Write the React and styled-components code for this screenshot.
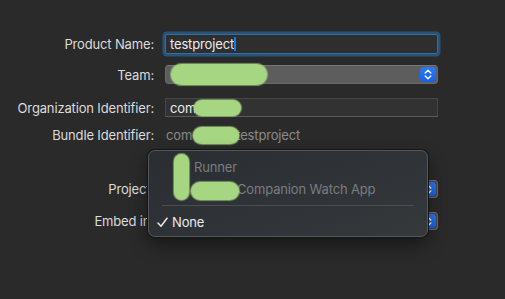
import styled, { createGlobalStyle } from "styled-components";

const GlobalStyle = createGlobalStyle`
  html, body {
    margin: 0;
    background: #2a2a2a;
  }
  body {
    font-family: Inter, "Noto Sans", sans-serif;
    letter-spacing: -0.15px;
    -webkit-font-smoothing: antialiased;
  }
`;

function Stepper() {
  return (
    <StepperBox>
      <svg width="8" height="11" viewBox="0 0 8 11" fill="none">
        <path d="M1.2 4 L4 1.3 L6.8 4" stroke="#fff" strokeWidth="1.4" strokeLinecap="round" strokeLinejoin="round" />
        <path d="M1.2 7 L4 9.7 L6.8 7" stroke="#fff" strokeWidth="1.4" strokeLinecap="round" strokeLinejoin="round" />
      </svg>
    </StepperBox>
  );
}

function Check() {
  return (
    <svg width="11" height="11" viewBox="0 0 11 11" fill="none">
      <path d="M1 6 L4 9.3 L10 1.2" stroke="#e6e6e6" strokeWidth="1.5" strokeLinecap="round" strokeLinejoin="round" />
    </svg>
  );
}

function App() {
  return (
    <>
      <GlobalStyle />
      <Page>
        <Form>
          <Row $top={34} $h={20}>
            <Label>Product Name:</Label>
            <TextField $focused>
              testproject
              <Caret />
            </TextField>
          </Row>
          <Row $top={11} $h={19}>
            <Label>Team:</Label>
            <Popup>
              <Blob style={{ left: 5, top: -2, width: 96, height: 21 }} />
              <Stepper />
            </Popup>
          </Row>
          <Row $top={14} $h={19}>
            <Label>Organization Identifier:</Label>
            <TextField>
              com
              <Blob style={{ left: 28, top: 1, width: 47, height: 16 }} />
            </TextField>
          </Row>
          <Row $top={10} $h={16}>
            <Label>Bundle Identifier:</Label>
            <Plain>
              com<Gap />testproject
              <Blob style={{ left: 28, top: 0, width: 46, height: 17 }} />
            </Plain>
          </Row>
          <Row $top={37} $h={18}>
            <Label>Project:</Label>
            <Popup $dark>
              <Stepper />
            </Popup>
          </Row>
          <Row $top={14} $h={18}>
            <Label>Embed in:</Label>
            <Popup $dark>
              <Stepper />
            </Popup>
          </Row>
        </Form>

        <Menu>
          <MenuItem $disabled>
            <CheckCol />
            <IconCol />
            Runner
          </MenuItem>
          <MenuItem $disabled>
            <CheckCol />
            <IconCol />
            <Hidden>Runner</Hidden>
            Companion Watch App
          </MenuItem>
          <Separator />
          <MenuItem>
            <CheckCol>
              <Check />
            </CheckCol>
            None
          </MenuItem>
          <Blob style={{ left: 25, top: 3, width: 15, height: 46 }} />
          <Blob style={{ left: 42, top: 31, width: 48, height: 18 }} />
        </Menu>
      </Page>
    </>
  );
}

export default App;

const Page = styled.div`
  position: relative;
  width: 505px;
  height: 299px;
  overflow: hidden;
`;

const Form = styled.div`
  display: flex;
  flex-direction: column;
`;

const Row = styled.div`
  display: grid;
  grid-template-columns: 154px 273px;
  column-gap: 11px;
  align-items: center;
  height: ${(p) => p.$h}px;
  margin-top: ${(p) => p.$top}px;
`;

const Label = styled.div`
  text-align: right;
  font-size: 13px;
  color: #dcdcdc;
  white-space: nowrap;
`;

const TextField = styled.div`
  position: relative;
  height: 100%;
  box-sizing: border-box;
  display: flex;
  align-items: center;
  padding-left: 4px;
  font-size: 13px;
  color: #ececec;
  background: ${(p) => (p.$focused ? "#2e2e2e" : "#323232")};
  border: 1px solid ${(p) => (p.$focused ? "#3b6d99" : "#464646")};
  border-bottom-color: ${(p) => (p.$focused ? "#3b6d99" : "#5a5a5a")};
  box-shadow: ${(p) => (p.$focused ? "0 0 0 2.5px #26537c" : "none")};
  border-radius: ${(p) => (p.$focused ? "2px" : "0")};
`;

const Caret = styled.span`
  display: inline-block;
  width: 2px;
  height: 14px;
  margin-left: 0;
  background: #0a7cff;
`;

const Popup = styled.div`
  position: relative;
  height: 100%;
  box-sizing: border-box;
  display: flex;
  justify-content: flex-end;
  align-items: center;
  padding-right: 1px;
  background: ${(p) => (p.$dark ? "#4a4a4a" : "#5d5d5d")};
  border: 1px solid #6a6a6a;
  border-top-color: #777;
  border-radius: 4px;
`;

const StepperBox = styled.div`
  width: 16px;
  height: calc(100% - 2px);
  border-radius: 4px;
  background: linear-gradient(#2a7af6, #1662e8);
  display: flex;
  align-items: center;
  justify-content: center;
`;

const Plain = styled.div`
  position: relative;
  padding-left: 1px;
  font-size: 13px;
  color: #8a8a8a;
  display: flex;
  align-items: center;
`;

const Gap = styled.span`
  display: inline-block;
  width: 44px;
`;

const Blob = styled.span`
  position: absolute;
  background: #a6d682;
  border-radius: 999px;
  box-shadow: 0 0 1px 1px rgba(166, 214, 130, 0.6);
`;

const Menu = styled.div`
  position: absolute;
  left: 148px;
  top: 150px;
  width: 280px;
  height: 87px;
  box-sizing: border-box;
  padding: 5px 0 4px;
  border-radius: 7px;
  background: linear-gradient(160deg, #2a2d31 0%, #303337 60%, #36393c 100%);
  border: 1px solid #55585b;
  box-shadow: 0 0 0 1px #151515, 0 8px 18px rgba(0, 0, 0, 0.45);
`;

const MenuItem = styled.div`
  height: 22px;
  display: flex;
  align-items: center;
  padding-left: 8px;
  font-size: 13px;
  white-space: nowrap;
  color: ${(p) => (p.$disabled ? "#7b7d80" : "#ececec")};
`;

const CheckCol = styled.span`
  width: 15px;
  display: flex;
  align-items: center;
`;

const IconCol = styled.span`
  width: 22px;
`;

const Hidden = styled.span`
  display: inline-block;
  width: 43px;
  overflow: hidden;
`;

const Separator = styled.div`
  height: 1px;
  margin: 5px 13px 5px;
  background: #4b4e51;
`;
